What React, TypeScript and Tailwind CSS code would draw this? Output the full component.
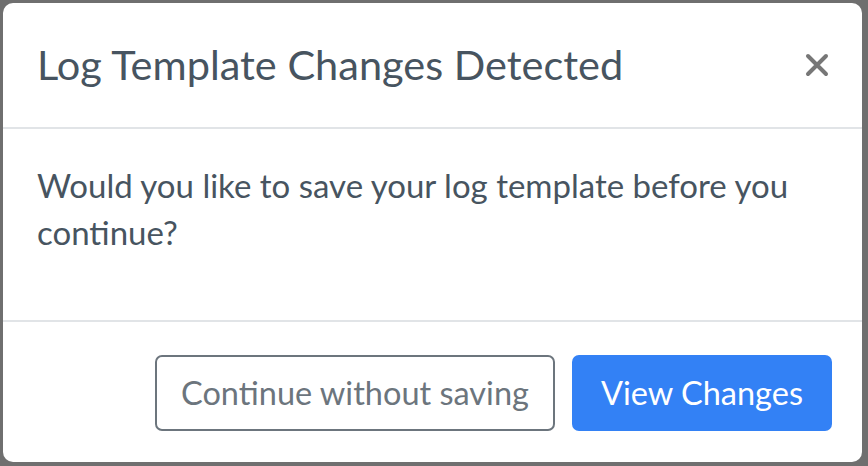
export default function App() {
  return (
    <div className="w-[868px] h-[466px] bg-[#6f6f6f] pt-[3px] pl-[3px] overflow-hidden" style={{ fontFamily: 'Lato, "Noto Sans", sans-serif' }}>
      <div className="w-[859px] h-[459px] bg-white rounded-[10px] flex flex-col">
        {/* Header */}
        <div className="h-[126px] flex items-center justify-between pl-[34px] pr-[32px] border-b-2 border-[#e1e4e7]">
          <h2 className="text-[41.5px] text-[#475460] leading-none">Log Template Changes Detected</h2>
          <button className="w-[26px] h-[26px] flex items-center justify-center">
            <svg width="24" height="24" viewBox="0 0 24 24">
              <path d="M3 3 L21 21 M21 3 L3 21" stroke="#777777" strokeWidth="4" strokeLinecap="round" />
            </svg>
          </button>
        </div>
        {/* Body */}
        <div className="h-[193px] pl-[34px] pr-[34px] pt-[33px] border-b-2 border-[#e1e4e7]">
          <p className="text-[33px] leading-[47px] text-[#475460]">
            Would you like to save your log template before you continue?
          </p>
        </div>
        {/* Footer */}
        <div className="flex-1 flex items-start justify-end gap-[17px] pr-[30px] pt-[33px]">
          <button className="w-[400px] h-[76px] border-2 border-[#6c757d] rounded-[7px] text-[32.5px] text-[#6c757d]">
            Continue without saving
          </button>
          <button className="w-[260px] h-[76px] bg-[#3381f5] rounded-[7px] text-[32.5px] text-white">
            View Changes
          </button>
        </div>
      </div>
    </div>
  );
}
